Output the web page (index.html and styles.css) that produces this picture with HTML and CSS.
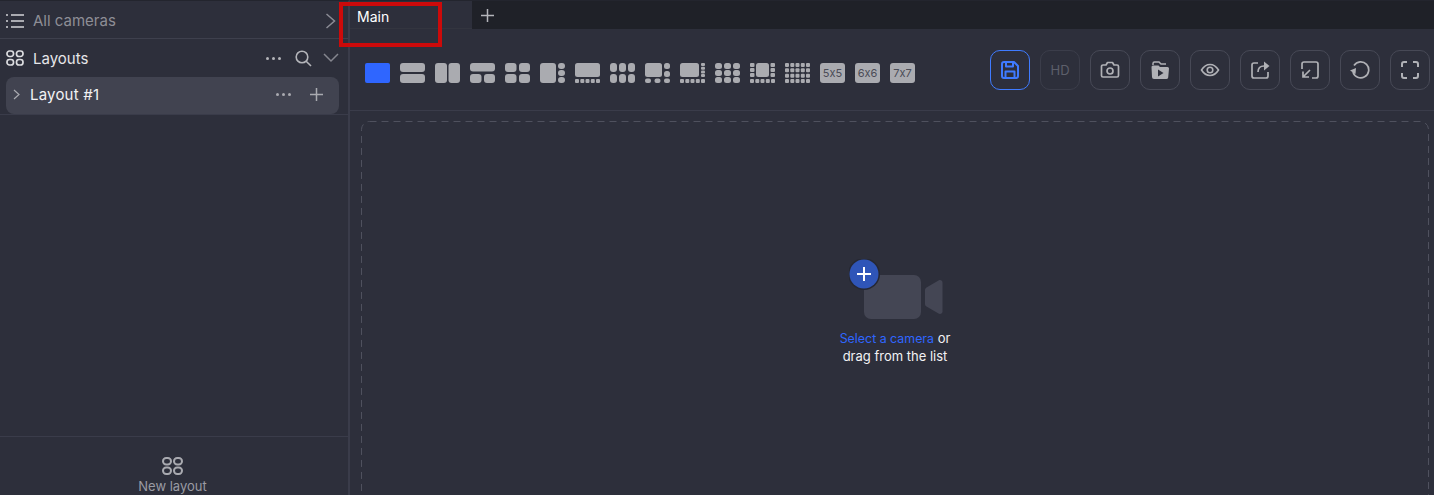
FILE: index.html
```html
<!DOCTYPE html>
<html lang="en">
<head>
<meta charset="utf-8">
<title>Cameras</title>
<link rel="stylesheet" href="styles.css">
</head>
<body>
<div class="app">
  <aside class="sidebar">
    <div class="cameras-row">
      <svg class="ico-list" viewBox="0 0 18 16" fill="none" stroke="#a9aab0" stroke-width="2"><path d="M5 2h13M5 8h13M5 14h13M0 2h2M0 8h2M0 14h2"/></svg>
      <span class="cameras-label">All cameras</span>
      <svg class="ico-chev-right" viewBox="0 0 11 16" fill="none" stroke="#8b8c95" stroke-width="1.5"><path d="M1.5 1l8 7-8 7"/></svg>
    </div>
    <div class="layouts-head">
      <svg class="ico-grid" viewBox="0 0 18 16" fill="none" stroke="#dcdde0" stroke-width="1.700"><rect x="1" y="1" width="6.500" height="5.500" rx="2.500"/><rect x="10.500" y="1" width="6.500" height="5.500" rx="2.500"/><rect x="1" y="9.500" width="6.500" height="5.500" rx="2.500"/><rect x="10.500" y="9.500" width="6.500" height="5.500" rx="2.500"/></svg>
      <span class="layouts-title">Layouts</span>
      <span class="dots dots-head"><i></i><i></i><i></i></span>
      <svg class="ico-search" viewBox="0 0 17 17" fill="none" stroke="#b4b5ba" stroke-width="1.6"><circle cx="7" cy="7" r="5.8"/><path d="M11.2 11.2l4.8 4.8"/></svg>
      <svg class="ico-chev-down" viewBox="0 0 16 10" fill="none" stroke="#85868f" stroke-width="1.5"><path d="M1 1l7 7 7-7"/></svg>
    </div>
    <div class="layout-item">
      <svg class="ico-chev-small" viewBox="0 0 7 11" fill="none" stroke="#a9aab0" stroke-width="1.2"><path d="M1 1l5 4.500-5 4.500"/></svg>
      <span class="layout-name">Layout #1</span>
      <span class="dots dots-item"><i></i><i></i><i></i></span>
      <svg class="ico-plus-item" viewBox="0 0 13 13" fill="none" stroke="#a9aab0" stroke-width="1.5"><path d="M6.500 0v13M0 6.500h13"/></svg>
    </div>
    <div class="sidebar-rule"></div>
    <div class="sidebar-spacer"></div>
    <div class="new-layout">
      <svg class="ico-grid-new" viewBox="0 0 21 18" fill="none" stroke="#a9aab0" stroke-width="2"><rect x="1" y="1" width="8" height="6.500" rx="3.200"/><rect x="12" y="1" width="8" height="6.500" rx="3.200"/><rect x="1" y="10.500" width="8" height="6.500" rx="3.200"/><rect x="12" y="10.500" width="8" height="6.500" rx="3.200"/></svg>
      <span class="new-layout-label">New layout</span>
    </div>
  </aside>
  <main class="main">
    <div class="tabbar">
      <div class="tab">Main</div>
      <svg class="ico-plus-tab" viewBox="0 0 13 13" fill="none" stroke="#b4b5ba" stroke-width="1.500"><path d="M6.500 0v13M0 6.500h13"/></svg>
    </div>
    <div class="toolbar">
      <div class="layout-picker">
        <svg class="lay" viewBox="0 0 25 20"><rect class="on" width="25" height="20" rx="2"/></svg>
        <svg class="lay" viewBox="0 0 25 20"><rect width="25" height="9" rx="3"/><rect y="11" width="25" height="9" rx="3"/></svg>
        <svg class="lay" viewBox="0 0 25 20"><rect width="12" height="20" rx="3"/><rect x="13.500" width="11.500" height="20" rx="3"/></svg>
        <svg class="lay" viewBox="0 0 25 20"><rect width="25" height="8.500" rx="3"/><rect y="11" width="11.500" height="9" rx="3"/><rect x="14" y="11" width="11" height="9" rx="3"/></svg>
        <svg class="lay" viewBox="0 0 25 20"><rect width="11.500" height="9" rx="3"/><rect x="14" width="11" height="9" rx="3"/><rect y="11" width="11.500" height="9" rx="3"/><rect x="14" y="11" width="11" height="9" rx="3"/></svg>
        <svg class="lay" viewBox="0 0 25 20"><rect width="16" height="20" rx="3"/><rect x="18" width="7" height="6" rx="3"/><rect x="18" y="7" width="7" height="6" rx="3"/><rect x="18" y="14" width="7" height="6" rx="3"/></svg>
        <svg class="lay" viewBox="0 0 25 20"><rect width="25" height="14" rx="2.500"/><rect y="16" width="4" height="4" rx="1"/><rect x="5.300" y="16" width="4" height="4" rx="1"/><rect x="10.500" y="16" width="4" height="4" rx="1"/><rect x="15.800" y="16" width="4" height="4" rx="1"/><rect x="21" y="16" width="4" height="4" rx="1"/></svg>
        <svg class="lay" viewBox="0 0 25 20"><rect width="7" height="9" rx="3"/><rect x="9" width="7" height="9" rx="3"/><rect x="18" width="7" height="9" rx="3"/><rect y="11" width="7" height="9" rx="3"/><rect x="9" y="11" width="7" height="9" rx="3"/><rect x="18" y="11" width="7" height="9" rx="3"/></svg>
        <svg class="lay" viewBox="0 0 25 20"><rect width="17" height="14" rx="2.500"/><rect x="19" width="6" height="6" rx="2.500"/><rect x="19" y="8" width="6" height="6" rx="2.500"/><rect y="15.500" width="6" height="4.500" rx="2"/><rect x="9.500" y="15.500" width="6" height="4.500" rx="2"/><rect x="19" y="15.500" width="6" height="4.500" rx="2"/></svg>
        <svg class="lay" viewBox="0 0 25 20"><rect width="19" height="14" rx="2.500"/><rect x="21" width="4" height="3" rx="1"/><rect x="21" y="3.700" width="4" height="3" rx="1"/><rect x="21" y="7.400" width="4" height="3" rx="1"/><rect x="21" y="11" width="4" height="3" rx="1"/><rect y="16" width="4" height="4" rx="1"/><rect x="5.300" y="16" width="4" height="4" rx="1"/><rect x="10.500" y="16" width="4" height="4" rx="1"/><rect x="15.800" y="16" width="4" height="4" rx="1"/><rect x="21" y="16" width="4" height="4" rx="1"/></svg>
        <svg class="lay" viewBox="0 0 25 20"><rect width="7" height="6" rx="2.500"/><rect x="9" width="7" height="6" rx="2.500"/><rect x="18" width="7" height="6" rx="2.500"/><rect y="7" width="7" height="6" rx="2.500"/><rect x="9" y="7" width="7" height="6" rx="2.500"/><rect x="18" y="7" width="7" height="6" rx="2.500"/><rect y="14" width="7" height="6" rx="2.500"/><rect x="9" y="14" width="7" height="6" rx="2.500"/><rect x="18" y="14" width="7" height="6" rx="2.500"/></svg>
        <svg class="lay" viewBox="0 0 25 20"><rect x="6" width="13" height="14" rx="2.500"/><rect width="4.500" height="4" rx="1"/><rect y="5" width="4.500" height="4" rx="1"/><rect y="10" width="4.500" height="4" rx="1"/><rect x="20.500" width="4.500" height="4" rx="1"/><rect x="20.500" y="5" width="4.500" height="4" rx="1"/><rect x="20.500" y="10" width="4.500" height="4" rx="1"/><rect y="16" width="4" height="4" rx="1"/><rect x="5.300" y="16" width="4" height="4" rx="1"/><rect x="10.500" y="16" width="4" height="4" rx="1"/><rect x="15.800" y="16" width="4" height="4" rx="1"/><rect x="21" y="16" width="4" height="4" rx="1"/></svg>
        <svg class="lay" viewBox="0 0 25 20"><rect width="4" height="4" rx="1"/><rect x="5.300" width="4" height="4" rx="1"/><rect x="10.500" width="4" height="4" rx="1"/><rect x="15.800" width="4" height="4" rx="1"/><rect x="21" width="4" height="4" rx="1"/><rect y="5.300" width="4" height="4" rx="1"/><rect x="5.300" y="5.300" width="4" height="4" rx="1"/><rect x="10.500" y="5.300" width="4" height="4" rx="1"/><rect x="15.800" y="5.300" width="4" height="4" rx="1"/><rect x="21" y="5.300" width="4" height="4" rx="1"/><rect y="10.700" width="4" height="4" rx="1"/><rect x="5.300" y="10.700" width="4" height="4" rx="1"/><rect x="10.500" y="10.700" width="4" height="4" rx="1"/><rect x="15.800" y="10.700" width="4" height="4" rx="1"/><rect x="21" y="10.700" width="4" height="4" rx="1"/><rect y="16" width="4" height="4" rx="1"/><rect x="5.300" y="16" width="4" height="4" rx="1"/><rect x="10.500" y="16" width="4" height="4" rx="1"/><rect x="15.800" y="16" width="4" height="4" rx="1"/><rect x="21" y="16" width="4" height="4" rx="1"/></svg>
        <span class="chip">5x5</span>
        <span class="chip">6x6</span>
        <span class="chip">7x7</span>
      </div>
      <div class="actions">
        <button class="act act-active"><svg viewBox="0 0 20 20" fill="none" stroke="#3f7bff" stroke-width="2" stroke-linejoin="round"><path d="M4 2h10l4 4v10a2 2 0 0 1-2 2H4a2 2 0 0 1-2-2V4a2 2 0 0 1 2-2z"/><path d="M6 2v4.500h7V2M5.500 18v-6.500h9V18"/></svg></button>
        <button class="act act-dim">HD</button>
        <button class="act"><svg viewBox="0 0 20 20" fill="none" stroke="#b0b1b6" stroke-width="1.700" stroke-linejoin="round"><path d="M3 5h3l1.500-2.500h5L14 5h3a1.500 1.500 0 0 1 1.500 1.500v9A1.500 1.500 0 0 1 17 17H3a1.500 1.500 0 0 1-1.500-1.500v-9A1.500 1.500 0 0 1 3 5z"/><circle cx="10" cy="11" r="3"/></svg></button>
        <button class="act"><svg viewBox="0 0 20 20"><path fill="none" stroke="#b0b1b6" stroke-width="1.500" d="M3 5V3.500A1.500 1.500 0 0 1 4.500 2H9l2 2h5"/><path fill="#b0b1b6" d="M3 5.500h5.500l1.500 1.500h7.500A1.500 1.500 0 0 1 19 8.500l-.8 9A2 2 0 0 1 16.200 19H4a2 2 0 0 1-2-2L1.500 7A1.500 1.500 0 0 1 3 5.500z"/><path fill="#2d2f3b" d="M8 9.500l5.500 3.500L8 16.500z"/></svg></button>
        <button class="act"><svg viewBox="0 0 20 20" fill="none" stroke="#b0b1b6" stroke-width="1.600"><path d="M1.500 10c2.500-4 5-5.500 8.500-5.500s6 1.500 8.500 5.500c-2.500 4-5 5.500-8.500 5.500s-6-1.500-8.500-5.500z"/><circle cx="10" cy="10" r="2.800"/></svg></button>
        <button class="act"><svg viewBox="0 0 20 20" fill="none" stroke="#b0b1b6" stroke-width="1.700"><path d="M8 3H4a2 2 0 0 0-2 2v11a2 2 0 0 0 2 2h12a2 2 0 0 0 2-2v-4"/><path d="M8 12c0-4 2-6 6-6"/><path fill="#b0b1b6" stroke="none" d="M14 1.500L19.500 6 14 10.500z"/></svg></button>
        <button class="act"><svg viewBox="0 0 20 20" fill="none" stroke="#b0b1b6" stroke-width="1.700"><path d="M2 9V4a2 2 0 0 1 2-2h12a2 2 0 0 1 2 2v12a2 2 0 0 1-2 2h-4"/><path d="M3 11.500V17h6M3.500 16.500L10 10"/></svg></button>
        <button class="act"><svg viewBox="0 0 20 20" fill="none" stroke="#b0b1b6" stroke-width="1.700"><path d="M4 5.500A8 8 0 1 1 3 12"/><path fill="#b0b1b6" stroke="none" d="M0 10.500L6 8l-.5 6z"/></svg></button>
        <button class="act"><svg viewBox="0 0 20 20" fill="none" stroke="#b0b1b6" stroke-width="2"><path d="M2 7V4a2 2 0 0 1 2-2h3M13 2h3a2 2 0 0 1 2 2v3M18 13v3a2 2 0 0 1-2 2h-3M7 18H4a2 2 0 0 1-2-2v-3"/></svg></button>
      </div>
    </div>
    <div class="stage">
      <svg class="stage-border" width="1068" height="382"><rect x=".5" y=".5" width="1067" height="381" rx="8" fill="none" stroke="#4f515e" stroke-dasharray="7 5"/></svg>
      <div class="empty">
        <div class="cam">
          <svg width="94" height="60" viewBox="0 0 94 60"><rect x="15" y="16" width="57" height="44" rx="7" fill="#444654"/><path fill="#444654" d="M76 31c0-1 .5-2 1.500-2.600l12-7c2-1 4 .2 4 2.400v28.400c0 2.200-2 3.400-4 2.400l-12-7c-1-.6-1.500-1.600-1.500-2.600z"/><circle cx="15" cy="15" r="16" fill="#262833"/><circle cx="15" cy="15" r="14.500" fill="#2f55b8"/><path stroke="#fff" stroke-width="2" d="M15 8v14M8 15h14"/></svg>
        </div>
        <p class="hint"><span class="hint-link">Select a camera</span> or<br>drag from the list</p>
      </div>
    </div>
  </main>
</div>
<div class="marker"></div>
</body>
</html>
```

FILE: styles.css
```css
* { box-sizing: border-box; }
html, body { margin: 0; height: 100%; }
body {
  background: #2d2f3b;
  color: #fff;
  font-family: Inter, "Noto Sans", sans-serif;
  font-feature-settings: "calt" 0;
  overflow: hidden;
}
svg { display: block; flex: none; }

.app { display: flex; height: 495px; overflow: hidden; }

.sidebar {
  width: 350px;
  flex: none;
  display: flex;
  flex-direction: column;
  border-right: 2px solid #3a3c4a;
  border-top: 1px solid #23252e;
}

.cameras-row {
  height: 38px;
  flex: none;
  display: flex;
  align-items: center;
  padding: 2px 12px 0 6px;
  border-bottom: 1px solid #3e404d;
}
.ico-list { width: 18px; height: 16px; }
.cameras-label { margin-left: 9px; font-size: 15px; color: #8d8e96; flex: 1; }
.ico-chev-right { width: 11px; height: 16px; }

.layouts-head {
  height: 38px;
  flex: none;
  display: flex;
  align-items: center;
  padding: 0 9px 0 6px;
}
.ico-grid { width: 18px; height: 16px; }
.layouts-title { margin-left: 9px; font-size: 15px; color: #e6e6e9; flex: 1; }
.dots { display: flex; gap: 3px; }
.dots i { width: 3px; height: 3px; border-radius: 50%; background: #b4b5ba; }
.dots-head { margin-right: 14px; }
.ico-search { width: 17px; height: 17px; margin-right: 11px; }
.ico-chev-down { width: 16px; height: 10px; }

.layout-item {
  height: 37px;
  flex: none;
  margin: 0 9px 0 6px;
  display: flex;
  align-items: center;
  padding: 0 16px 2px 7px;
  background: #414350;
  border-radius: 8px;
}
.ico-chev-small { width: 7px; height: 11px; }
.layout-name { margin-left: 10px; font-size: 15px; letter-spacing: .2px; color: #f2f2f4; flex: 1; }
.dots-item { margin-right: 19px; }
.dots-item i { background: #a9aab0; }
.ico-plus-item { width: 13px; height: 13px; }

.sidebar-rule { height: 1px; flex: none; background: #3a3c4a; }
.sidebar-spacer { flex: 1; }

.new-layout {
  height: 59px;
  flex: none;
  border-top: 1px solid #3a3c4a;
  display: flex;
  flex-direction: column;
  align-items: center;
  padding: 20px 3px 0 0;
}
.ico-grid-new { width: 21px; height: 18px; }
.new-layout-label { margin-top: 3px; font-size: 13px; color: #9a9ba3; }

.main { flex: 1; min-width: 0; display: flex; flex-direction: column; }

.tabbar {
  height: 29px;
  flex: none;
  display: flex;
  align-items: center;
  background: #1f2128;
  border-top: 1px solid #23252e;
}
.tab {
  width: 122px;
  height: 28px;
  padding: 7px 0 0 7px;
  font-size: 14px;
  background: #2d2f3b;
  border-bottom: 1px solid #33353f;
}
.ico-plus-tab { width: 13px; height: 13px; margin: 0 0 0 9px; }

.toolbar {
  height: 82px;
  flex: none;
  display: flex;
  align-items: center;
  justify-content: space-between;
  padding: 0 0 0 15px;
  border-bottom: 1px solid #3a3c4a;
  overflow: hidden;
}
.layout-picker { display: flex; align-items: center; gap: 10px; margin-top: 7px; }
.lay { width: 25px; height: 20px; fill: #aaabb0; }
.lay .on { fill: #2f66ff; }
.chip {
  width: 25px;
  height: 20px;
  border-radius: 3px;
  background: #aaabb0;
  color: #4a4c57;
  font-size: 11px;
  line-height: 20px;
  text-align: center;
}

.actions { display: flex; gap: 10px; margin-right: 4px; flex: none; }
.act {
  width: 40px;
  height: 40px;
  padding: 0;
  display: flex;
  align-items: center;
  justify-content: center;
  background: none;
  border: 1px solid #474956;
  border-radius: 10px;
  font: 13px Inter, sans-serif;
}
.act svg { width: 20px; height: 20px; }
.act-active { border-color: #3f7bff; }
.act-dim { color: #5d5f6b; border-color: #3b3d4a; }

.stage {
  position: relative;
  width: 1068px;
  height: 382px;
  flex: none;
  margin: 10px 0 0 11px;
  display: flex;
  align-items: center;
  justify-content: center;
}
.stage-border { position: absolute; left: 0; top: 0; }

.empty { display: flex; flex-direction: column; align-items: center; }
.cam { padding-left: 2px; }
.hint {
  margin: 11px 0 0;
  font-size: 13px;
  line-height: 17.6px;
  text-align: center;
  color: #f2f2f4;
}
.hint-link { font-size: 12.4px; color: #2f66ff; }

.marker {
  position: absolute;
  left: 339px;
  top: 2px;
  width: 103px;
  height: 45px;
  border: 4px solid #cc0a0a;
}
```
